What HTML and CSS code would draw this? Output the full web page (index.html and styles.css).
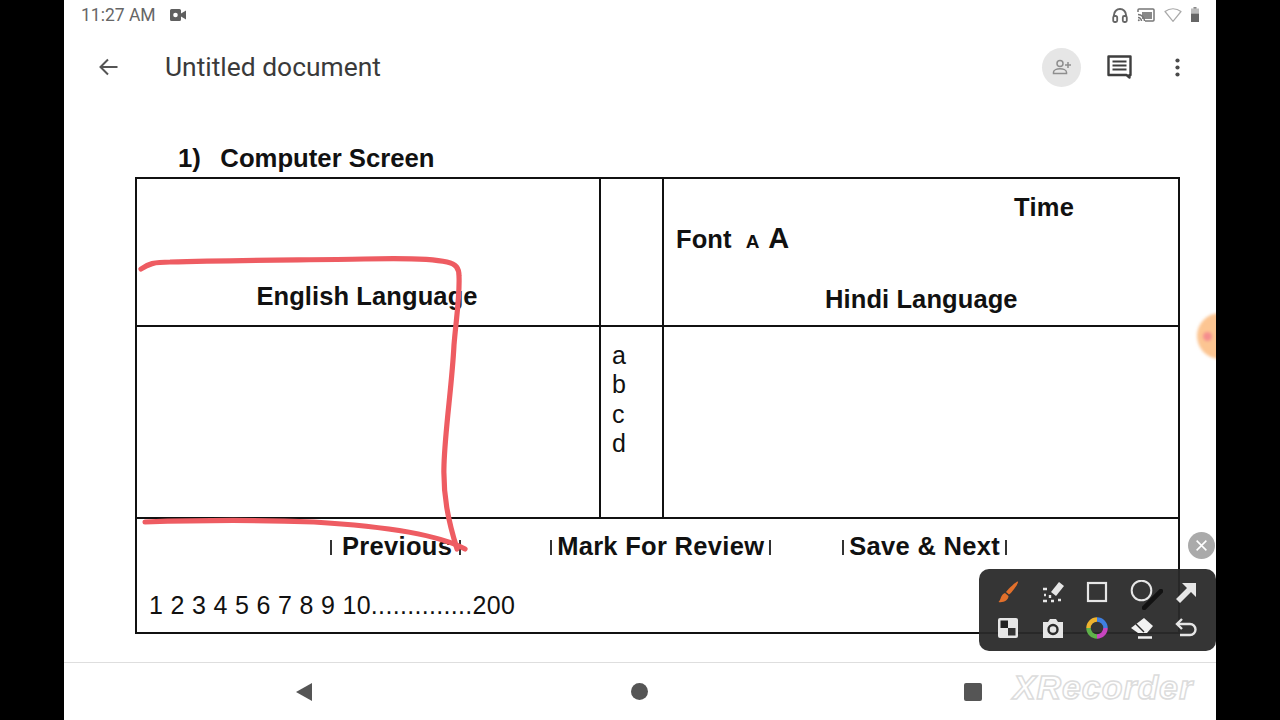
FILE: index.html
```html
<!DOCTYPE html>
<html lang="en">
<head>
<meta charset="utf-8">
<title>Untitled document</title>
<link rel="stylesheet" href="styles.css">
</head>
<body>
<div class="screen">
  <header class="status">
    <div class="status-left">
      <span class="clock">11:27 AM</span>
      <svg class="ic-cam" viewBox="0 0 18 14"><path d="M1 2.500A1.500 1.500 0 0 1 2.500 1h8A1.500 1.500 0 0 1 12 2.500v9a1.500 1.500 0 0 1-1.500 1.500h-8A1.500 1.500 0 0 1 1 11.500z" fill="#5f5f5f"/><path d="M12 5.500l5-3v9l-5-3z" fill="#5f5f5f"/><circle cx="6.500" cy="7" r="2.300" fill="#fff"/></svg>
    </div>
    <div class="status-right">
      <svg class="ic-s1" viewBox="0 0 16 16"><path d="M2 10V8a6 6 0 0 1 12 0v2" fill="none" stroke="#666" stroke-width="1.900"/><rect x="1.200" y="9" width="4" height="6" rx="1.500" fill="none" stroke="#666" stroke-width="1.800"/><rect x="10.800" y="9" width="4" height="6" rx="1.500" fill="none" stroke="#666" stroke-width="1.800"/></svg>
      <svg class="ic-s2" viewBox="0 0 18 14"><path d="M1 4V2a1 1 0 0 1 1-1h14a1 1 0 0 1 1 1v10a1 1 0 0 1-1 1H8" fill="none" stroke="#777" stroke-width="1.500"/><rect x="5" y="4" width="10" height="7" fill="#888"/><path d="M1 6.500a6.500 6.500 0 0 1 6.500 6.500M1 9.500A3.500 3.500 0 0 1 4.500 13" fill="none" stroke="#777" stroke-width="1.500"/><circle cx="1.800" cy="12.200" r="1" fill="#777"/></svg>
      <svg class="ic-s3" viewBox="0 0 18 14"><path d="M1 3.500C5.800-.2 12.200-.2 17 3.500L9 13.300z" fill="#fff" stroke="#aaa" stroke-width="1.200" stroke-linejoin="round"/></svg>
      <svg class="ic-s4" viewBox="0 0 8 15"><rect x="2.500" y="0" width="3" height="2" fill="#888"/><rect x="0" y="1.500" width="8" height="5" fill="#bbb"/><rect x="0" y="6.500" width="8" height="8.500" fill="#666"/></svg>
    </div>
  </header>

  <nav class="appbar">
    <svg class="ic-back" viewBox="0 0 20 18"><path d="M19.500 9H2.500M10 1.500L2.500 9l7.500 7.500" fill="none" stroke="#555" stroke-width="2"/></svg>
    <h1 class="doc-title">Untitled document</h1>
    <div class="share">
      <svg viewBox="0 0 20 16"><circle cx="8" cy="4.500" r="3" fill="none" stroke="#8e8e8e" stroke-width="1.500"/><path d="M1.500 14.500v-1.200C1.500 11 5 9.800 8 9.800s6.500 1.200 6.500 3.500v1.200z" fill="none" stroke="#8e8e8e" stroke-width="1.500"/><path d="M16 3v6M13 6h6" stroke="#8e8e8e" stroke-width="1.500"/></svg>
    </div>
    <svg class="ic-comment" viewBox="0 0 25 24"><path d="M1.500 1.500h22v18.500h-1v2.500l-3-2.500H1.500z" fill="#fff" stroke="#3e3e3e" stroke-width="2.400" stroke-linejoin="round"/><path d="M5.500 6.500h14M5.500 10.500h14M5.500 14.500h14" stroke="#3e3e3e" stroke-width="2.200"/></svg>
    <svg class="ic-more" viewBox="0 0 5 19"><circle cx="2.500" cy="2.500" r="2.100" fill="#4a4a4a"/><circle cx="2.500" cy="9.500" r="2.100" fill="#4a4a4a"/><circle cx="2.500" cy="16.500" r="2.100" fill="#4a4a4a"/></svg>
  </nav>

  <main class="doc">
    <h2 class="question"><span class="q-num">1)</span>Computer Screen</h2>
    <div class="sheet">
      <div class="cell english"><b>English Language</b></div>
      <div class="cell middle-top"></div>
      <div class="cell hindi">
        <b class="time">Time</b>
        <b class="font-row">Font<span class="a-small">A</span><span class="a-large">A</span></b>
        <b class="hindi-label">Hindi Language</b>
      </div>
      <div class="cell blank"></div>
      <div class="cell options"><span>a</span><span>b</span><span>c</span><span>d</span></div>
      <div class="cell blank-right"></div>
      <div class="cell footer">
        <div class="actions">
          <b class="act-prev"><i class="tick"></i><span class="act-text">Previous</span><i class="tick"></i></b>
          <b class="act-mark"><i class="tick"></i><span class="act-text">Mark For Review</span><i class="tick"></i></b>
          <b class="act-save"><i class="tick"></i><span class="act-text">Save &amp; Next</span><i class="tick"></i></b>
        </div>
        <div class="pages">1 2 3 4 5 6 7 8 9 10..............200</div>
      </div>
    </div>
  </main>

  <footer class="navbar">
    <svg class="nav-back" viewBox="0 0 18 18"><path d="M17 0v18L1 9z" fill="#555"/></svg>
    <span class="nav-home"></span>
    <span class="nav-recent"></span>
  </footer>

  <span class="watermark">XRecorder</span>

  <svg class="ink" viewBox="0 0 1152 720">
    <path d="M77 269C84 264 90 262 106 262C170 260 240 260 300 259C340 258 370 259 383 262C392 264 395 268 395 276C396 296 392 320 390 345C388 385 381 430 380 465C379 495 384 520 393 549"/>
    <path d="M81 522C140 520 200 520 250 522C300 525 370 532 401 549"/>
  </svg>

  <div class="pen-dot"><span></span></div>
  <div class="close-btn">
    <svg viewBox="0 0 12 12"><path d="M1.500 1.500l9 9M10.500 1.500l-9 9" stroke="#fff" stroke-width="1.400"/></svg>
  </div>

  <div class="toolbar">
    <svg class="tool-pen" viewBox="0 0 20 20"><path d="M2 18L18 2" fill="none" stroke="#121212" stroke-width="4.500" stroke-linecap="round"/></svg>
    <svg viewBox="0 0 24 24"><path d="M22 1.500c1 1-5 10-9 13l-3-2.500c3-4 11-11.500 12-10.500z" fill="#e2702b"/><path d="M9 13l3.500 3c0 4-5 7-10 6 2.500-2 2-7.500 6.500-9z" fill="#e2702b"/></svg>
    <svg viewBox="0 0 24 24"><path d="M10 12L18 2l5 4-8 10z" fill="#e6e6e6"/><path d="M2 9h4M2 21h4M9 15v3M10 21h3M17 20h3M3 15h2" stroke="#e6e6e6" stroke-width="2.400"/></svg>
    <svg viewBox="0 0 24 24"><rect x="3" y="3" width="18" height="18" fill="none" stroke="#e6e6e6" stroke-width="2.200"/></svg>
    <svg viewBox="0 0 24 24"><circle cx="11.500" cy="10.500" r="9.800" fill="none" stroke="#e6e6e6" stroke-width="2"/></svg>
    <svg viewBox="0 0 24 24"><path d="M8 3h14v14l-5-5L6 23l-4-4 11-11z" fill="#e6e6e6"/></svg>
    <svg viewBox="0 0 24 24"><rect x="2" y="2" width="20" height="20" rx="2" fill="#e6e6e6"/><rect x="4.500" y="4.500" width="7.500" height="7.500" fill="#222"/><rect x="12" y="12" width="7.500" height="7.500" fill="#333"/></svg>
    <svg viewBox="0 0 24 24"><path d="M2 6h5l2-3h6l2 3h5v16H2z" fill="#e6e6e6"/><circle cx="12" cy="13.500" r="4.500" fill="#e6e6e6" stroke="#2b2b2b" stroke-width="2.400"/></svg>
    <svg viewBox="0 0 24 24"><g fill="none" stroke-width="4.500"><path d="M3.500 12A8.500 8.500 0 0 1 12 3.500" stroke="#eeb32e"/><path d="M12 3.500A8.500 8.500 0 0 1 20.500 12" stroke="#3f7fe0"/><path d="M20.500 12A8.500 8.500 0 0 1 12 20.500" stroke="#c845c0"/><path d="M12 20.500A8.500 8.500 0 0 1 3.500 12" stroke="#5fb24a"/></g></svg>
    <svg viewBox="0 0 24 24"><path d="M14 2l9 8-6 7H8l-7-5z" fill="#f2f2f2"/><path d="M6 8l8 8" stroke="#2b2b2b" stroke-width="1.500"/><path d="M8 21.500h14" stroke="#f2f2f2" stroke-width="2.500"/></svg>
    <svg viewBox="0 0 24 24"><path d="M3 8h13a5.500 5.500 0 0 1 0 11H6" fill="none" stroke="#e6e6e6" stroke-width="2.400"/><path d="M8 3L3 8l5 5" fill="none" stroke="#e6e6e6" stroke-width="2.400"/></svg>
  </div>
</div>
</body>
</html>
```

FILE: styles.css
```css
* { box-sizing: border-box; }
html, body { margin: 0; height: 100%; background: #000; overflow: hidden; }
body { font-family: "Liberation Sans", Arial, sans-serif; color: #111; }
b { font-weight: 700; }
h1, h2 { margin: 0; }

.screen {
  position: relative;
  width: 1152px;
  height: 720px;
  margin: 0 64px;
  background: #fff;
  display: flex;
  flex-direction: column;
  overflow: hidden;
}

.status {
  height: 29px;
  padding: 0 17px 0 17px;
  display: flex;
  justify-content: space-between;
  align-items: center;
  color: #666;
}
.status-left { display: flex; align-items: center; gap: 13px; }
.clock { font: 400 17.500px Roboto, sans-serif; color: #666; }
.ic-cam { width: 18px; height: 14px; }
.status-right { display: flex; align-items: center; gap: 9px; }
.ic-s1 { width: 16px; height: 16px; }
.ic-s2 { width: 18px; height: 14px; }
.ic-s3 { width: 18px; height: 14px; }
.ic-s4 { width: 8px; height: 15px; }

.appbar {
  height: 76px;
  display: flex;
  align-items: center;
  padding: 0 36px 0 34px;
}
.ic-back { width: 20px; height: 18px; }
.doc-title {
  font: 400 26.400px Roboto, sans-serif;
  color: #3a3a3a;
  margin-left: 47px;
  flex: 1;
}
.share {
  width: 39px;
  height: 39px;
  border-radius: 50%;
  background: #e6e6e6;
  display: flex;
  align-items: center;
  justify-content: center;
}
.share svg { width: 20px; height: 16px; }
.ic-comment { width: 25px; height: 24px; margin-left: 26px; }
.ic-more { width: 5px; height: 19px; margin-left: 43px; }

.doc { flex: 1; padding: 0 36px 0 71px; }
.question {
  font-size: 25.700px;
  font-weight: 700;
  line-height: 28px;
  color: #111;
  margin: 39px 0 5px 43px;
  height: 28px;
  display: flex;
}
.q-num { margin-right: 19.500px; }
.sheet {
  width: 1045px;
  height: 457px;
  border: 2px solid #111;
  display: grid;
  grid-template-columns: 462px 65px 1fr;
  grid-template-rows: 148px 192px 1fr;
  font-size: 25.500px;
  letter-spacing: .1px;
}
.cell { min-width: 0; }
.english {
  border-bottom: 2px solid #111;
  display: flex;
  align-items: flex-end;
  justify-content: center;
  padding-bottom: 15px;
  padding-right: 2px;
  line-height: 28px;
}
.middle-top {
  border-left: 2px solid #111;
  border-right: 2px solid #111;
  border-bottom: 2px solid #111;
}
.hindi {
  border-bottom: 2px solid #111;
  display: flex;
  flex-direction: column;
  padding: 14px 0 12px 12px;
  line-height: 28px;
}
.time { align-self: flex-start; margin-left: 338px; letter-spacing: .3px; }
.font-row { margin-top: 3px; display: flex; align-items: baseline; }
.a-small { font-size: 19px; margin-left: 14px; letter-spacing: 0; }
.a-large { font-size: 29px; margin-left: 9px; letter-spacing: 0; }
.hindi-label { margin-top: auto; align-self: flex-start; margin-left: 149px; }
.blank { border-bottom: 2px solid #111; }
.options {
  border-left: 2px solid #111;
  border-right: 2px solid #111;
  border-bottom: 2px solid #111;
  display: flex;
  flex-direction: column;
  padding: 14px 0 0 11px;
  font-size: 25px;
  letter-spacing: 0;
  line-height: 29.300px;
}
.blank-right { border-bottom: 2px solid #111; }
.footer { grid-column: 1 / -1; display: flex; flex-direction: column; }
.actions { display: flex; height: 41px; align-items: flex-end; line-height: 28px; letter-spacing: .3px; }
.actions b { display: inline-flex; align-items: center; white-space: pre; }
.act-prev { margin-left: 193px; }
.act-mark { margin-left: 89px; }
.act-save { margin-left: 71px; }
.act-prev .act-text { margin: 0 7px 0 10px; }
.act-mark .act-text, .act-save .act-text { margin: 0 5px 0 5px; }
.tick { display: inline-block; width: 2px; height: 15px; background: #333; margin-top: 3px; }
.pages { margin: 31px 0 0 12px; font-size: 25px; letter-spacing: .32px; line-height: 28px; }

.navbar {
  height: 58px;
  border-top: 1px solid #dedede;
  display: flex;
  align-items: center;
  justify-content: space-between;
  padding: 0 234px 0 231px;
}
.nav-back { width: 18px; height: 18px; }
.nav-home { width: 17px; height: 17px; margin-left: 1px; border-radius: 50%; background: #555; }
.nav-recent { width: 18px; height: 18px; border-radius: 2px; background: #555; }

.watermark {
  position: absolute;
  left: 949px;
  top: 668px;
  font: italic 700 34px "Liberation Sans", sans-serif;
  color: #fff;
  -webkit-text-stroke: 1.500px #dcdcdc;
  letter-spacing: .9px;
}
.ink { position: absolute; left: 0; top: 0; width: 1152px; height: 720px; pointer-events: none; }
.ink path { fill: none; stroke: #ee5c62; stroke-width: 5.200; stroke-linecap: round; stroke-linejoin: round; }

.pen-dot {
  position: absolute;
  left: 1133px;
  top: 313px;
  width: 46px;
  height: 46px;
  border-radius: 50%;
  background: #fcc592;
  display: flex;
  align-items: center;
  padding-left: 6px;
  filter: blur(1.500px);
}
.pen-dot span { width: 9px; height: 9px; border-radius: 50%; background: #f58e8e; }

.close-btn {
  position: absolute;
  left: 1124px;
  top: 532px;
  width: 27px;
  height: 27px;
  border-radius: 50%;
  background: #aaa;
  display: flex;
  align-items: center;
  justify-content: center;
}
.close-btn svg { width: 13px; height: 13px; }

.toolbar {
  position: absolute;
  left: 915px;
  top: 569px;
  width: 237px;
  height: 82px;
  border-radius: 10px;
  background: rgba(42, 42, 42, .95);
  display: grid;
  grid-template-columns: repeat(5, 24px);
  grid-template-rows: repeat(2, 24px);
  column-gap: 20.500px;
  row-gap: 12px;
  padding: 11px 0 0 17px;
}
.toolbar svg { position: relative; width: 24px; height: 24px; }
.toolbar .tool-pen { position: absolute; left: 163px; top: 20px; width: 21px; height: 21px; }
```
